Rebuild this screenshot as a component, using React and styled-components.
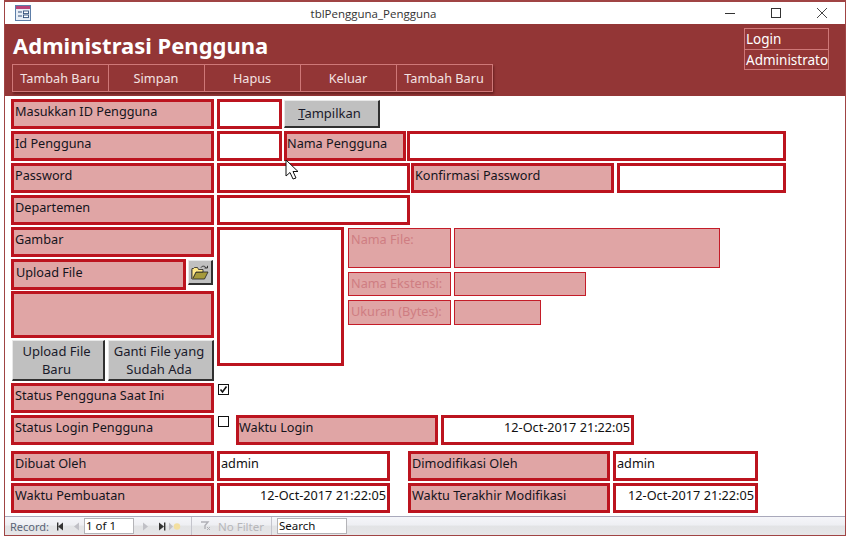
import React from "react";
import styled, { createGlobalStyle } from "styled-components";

const Global = createGlobalStyle`
  html, body { margin: 0; padding: 0; background: #fff; }
  body { font-family: "Noto Sans", "Open Sans", sans-serif; font-size: 12.7px; color: #111; }
`;

const Frame = styled.div`
  position: relative;
  box-sizing: border-box;
  width: 842px;
  height: 536px;
  margin: 0 6px 4px 4px;
  border: 1px solid #a04444;
  border-top-width: 2px;
  display: flex;
  flex-direction: column;
  overflow: hidden;
  background: #fff;
`;
const TitleBar = styled.div`
  flex: 0 0 22px;
  display: flex;
  align-items: center;
  padding-left: 10px;
`;
const TitleText = styled.div`
  flex: 1;
  text-align: center;
  font-family: "Open Sans", sans-serif;
  font-size: 11.5px;
  color: #333;
  padding-left: 9px;
`;
const WinBtns = styled.div`
  display: flex;
  width: 138px;
`;
const WinBtn = styled.div`
  width: 46px;
  height: 22px;
  display: flex;
  align-items: center;
  justify-content: center;
  svg { display: block; }
`;
const Header = styled.div`
  flex: 0 0 72px;
  background: #933636;
  display: flex;
  justify-content: space-between;
  padding: 4px 16px 0 7px;
  box-sizing: border-box;
`;
const HeaderLeft = styled.div`
  display: flex;
  flex-direction: column;
`;
const Heading = styled.div`
  font-size: 22px;
  line-height: 34px;
  height: 36px;
  font-weight: 700;
  color: #fff;
  padding-left: 1px;
`;
const Nav = styled.div`
  display: flex;
  box-sizing: border-box;
  width: 481px;
  height: 28px;
  border: 1px solid #cf7878;
  box-shadow: 1px 2px 2px rgba(70, 15, 15, 0.55);
`;
const NavItem = styled.div`
  flex: 1;
  display: flex;
  align-items: center;
  justify-content: center;
  color: #f4e2e2;
  font-size: 12.7px;
  padding-right: 1px;
  & + & { border-left: 1px solid #cf7878; }
`;
const LoginBox = styled.div`
  box-sizing: border-box;
  width: 85px;
  height: 42px;
  border: 1px solid #cf7878;
  display: flex;
  flex-direction: column;
  color: #fff;
  font-size: 13.5px;
  overflow: hidden;
`;
const LoginLine = styled.div`
  flex: 1;
  line-height: 20px;
  padding-left: 1px;
  white-space: nowrap;
  & + & { border-top: 1px solid #cf7878; }
`;
const Form = styled.div`
  flex: 1;
  padding: 3px 0 0 6px;
  display: flex;
  flex-direction: column;
`;
const Row = styled.div`
  display: flex;
  height: ${p => p.$h || 30}px;
  margin-bottom: ${p => p.$mb ?? 2}px;
`;
const Label = styled.div`
  box-sizing: border-box;
  width: ${p => p.$w || 203}px;
  height: ${p => p.$h ? p.$h + "px" : "100%"};
  margin-bottom: ${p => p.$mb || 0}px;
  margin-left: ${p => p.$ml || 0}px;
  border: 3px solid #bc141f;
  background: #e0a5a5;
  padding-left: ${p => p.$pl ?? 1}px;
  font-size: 12.7px;
  line-height: ${p => p.$lh || 19}px;
  white-space: nowrap;
  overflow: hidden;
  color: #14141c;
`;
const Input = styled.div`
  box-sizing: border-box;
  width: ${p => p.$w}px;
  height: ${p => p.$h ? p.$h + "px" : "100%"};
  margin-left: ${p => p.$ml ?? 3}px;
  border: 3px solid #bc141f;
  background: #fff;
  padding: 0 1px;
  font-size: 12.7px;
  line-height: 19px;
  text-align: ${p => p.$right ? "right" : "left"};
  white-space: nowrap;
  color: #111;
`;
const GreyButton = styled.div`
  box-sizing: border-box;
  background: #c0c0c0;
  border-right: 2px solid #303030;
  border-bottom: 2px solid #303030;
  border-top: 1px solid #e8e8e8;
  border-left: 1px solid #e8e8e8;
  text-align: center;
  color: #1a1a2a;
  font-size: 13px;
`;
const ShowButton = styled(GreyButton)`
  width: 96px;
  height: 28px;
  margin: 1px 0 0 2px;
  line-height: 25px;
  padding-right: 4px;
  u { text-decoration: underline; }
`;
const FolderButton = styled(GreyButton)`
  width: 25px;
  height: 25px;
  margin: 1px 0 0 2px;
  display: flex;
  align-items: center;
  justify-content: center;
  svg { display: block; }
`;
const Block = styled.div`
  display: flex;
  margin-bottom: 2px;
  height: 154px;
`;
const LeftColumn = styled.div`
  width: 203px;
  display: flex;
  flex-direction: column;
`;
const ActionRow = styled.div`
  display: flex;
  justify-content: space-between;
  height: 41px;
  padding-left: 1px;
`;
const ActionButton = styled(GreyButton)`
  width: ${p => p.$w}px;
  line-height: 18px;
  padding: 1px 3px 0 0;
  white-space: nowrap;
`;
const Details = styled.div`
  margin: 1px 0 0 4px;
  display: flex;
  flex-direction: column;
  gap: 4px;
`;
const DetailRow = styled.div`
  display: flex;
  gap: 3px;
  height: ${p => p.$h}px;
`;
const DetailBox = styled.div`
  box-sizing: border-box;
  width: ${p => p.$w}px;
  border: 1px solid #c41c28;
  background: #e0a5a5;
  color: #cf7d82;
  font-size: 12.7px;
  line-height: 20px;
  padding-left: 2px;
  white-space: nowrap;
  overflow: hidden;
`;
const Check = styled.div`
  box-sizing: border-box;
  width: 11px;
  height: 11px;
  margin: 1px 0 0 4px;
  border: 1px solid #111;
  background: #fff;
  svg { display: block; }
`;
const Footer = styled.div`
  flex: 0 0 19px;
  box-sizing: border-box;
  border-top: 1px solid #a9a9bb;
  background: linear-gradient(#f5f5f9 0%, #eeeff3 45%, #e2e3e5 50%, #e6e6e8 100%);
  display: flex;
  align-items: center;
  font-size: 11px;
  color: #5a6478;
  margin-top: auto;
`;
const RecordLabel = styled.span`
  margin-left: 5px;
  width: 42px;
`;
const NavIcon = styled.span`
  display: inline-flex;
  position: relative;
  width: ${p => p.$w || 16}px;
  justify-content: center;
  svg { display: block; }
`;
const FooterInput = styled.div`
  box-sizing: border-box;
  width: ${p => p.$w}px;
  height: 16px;
  margin-left: ${p => p.$ml || 0}px;
  border: 1px solid #b4b4b8;
  background: #fff;
  color: #111;
  font-size: 11.5px;
  line-height: 14px;
  padding-left: 1px;
`;
const FooterSep = styled.div`
  width: 1px;
  height: 18px;
  background: #c4c4cc;
  margin-left: ${p => p.$ml}px;
`;
const NoFilter = styled.span`
  color: #b6b6ba;
  font-size: 11.5px;
`;
const Pointer = styled.svg`
  position: absolute;
  left: 280px;
  top: 157px;
  display: block;
`;

const Arrow = ({ dir = "r", bar, color = "#333" }) => (
  <svg width="9" height="9" viewBox="0 0 9 9">
    <path d={dir === "r" ? "M2 0.5 L7 4.5 L2 8.5 Z" : "M7 0.5 L2 4.5 L7 8.5 Z"} fill={color} />
    {bar && <rect x={dir === "r" ? 7 : 1} y="0.5" width="1.4" height="8" fill={color} />}
  </svg>
);

export default function App() {
  return (
    <>
      <Global />
      <Frame>
        <TitleBar>
          <svg width="16" height="16" viewBox="0 0 16 16">
            <rect x="0.5" y="0.5" width="15" height="15" fill="#e8eef6" stroke="#5d7ea8" />
            <rect x="1" y="1" width="14" height="3" fill="#b9447a" />
            <path d="M3 7h4M3 11h4" stroke="#33507a" strokeWidth="1.2" />
            <rect x="8.5" y="6" width="5" height="2.6" fill="#fff" stroke="#33507a" strokeWidth="0.9" />
            <rect x="8.5" y="10" width="5" height="2.6" fill="#fff" stroke="#33507a" strokeWidth="0.9" />
          </svg>
          <TitleText>tblPengguna_Pengguna</TitleText>
          <WinBtns>
            <WinBtn>
              <svg width="10" height="10" viewBox="0 0 10 10"><path d="M0 5.5h10" stroke="#333" /></svg>
            </WinBtn>
            <WinBtn>
              <svg width="10" height="10" viewBox="0 0 10 10"><rect x="0.5" y="0.5" width="9" height="9" fill="none" stroke="#333" /></svg>
            </WinBtn>
            <WinBtn>
              <svg width="10" height="10" viewBox="0 0 10 10"><path d="M0 0L10 10M10 0L0 10" stroke="#333" strokeWidth="0.9" /></svg>
            </WinBtn>
          </WinBtns>
        </TitleBar>
        <Header>
          <HeaderLeft>
            <Heading>Administrasi Pengguna</Heading>
            <Nav>
              <NavItem>Tambah Baru</NavItem>
              <NavItem>Simpan</NavItem>
              <NavItem>Hapus</NavItem>
              <NavItem>Keluar</NavItem>
              <NavItem>Tambah Baru</NavItem>
            </Nav>
          </HeaderLeft>
          <LoginBox>
            <LoginLine>Login</LoginLine>
            <LoginLine>Administrato</LoginLine>
          </LoginBox>
        </Header>
        <Form>
          <Row>
            <Label>Masukkan ID Pengguna</Label>
            <Input $w={65} />
            <ShowButton><u>T</u>ampilkan</ShowButton>
          </Row>
          <Row>
            <Label>Id Pengguna</Label>
            <Input $w={65} />
            <Label $w={122} $ml={2} $pl={0}>Nama Pengguna</Label>
            <Input $w={379} $ml={1} />
          </Row>
          <Row>
            <Label>Password</Label>
            <Input $w={193} />
            <Label $w={203} $ml={1}>Konfirmasi Password</Label>
            <Input $w={169} />
          </Row>
          <Row>
            <Label>Departemen</Label>
            <Input $w={193} />
          </Row>
          <Block>
            <LeftColumn>
              <Label $h={30} $mb={2}>Gambar</Label>
              <Row $h={31} $mb={1}>
                <Label $w={175} $pl={2} $lh={21}>Upload File</Label>
                <FolderButton>
                  <svg width="18" height="15" viewBox="0 0 18 15">
                    <path d="M1 4.5V14H13.5L17 7H5L2 13" fill="#a69a3c" stroke="#222" strokeWidth="0.8" />
                    <path d="M1 14V3.5H2.5L3.5 2.5H6.5L7.5 4.5H12V7H5L2 13" fill="#ffe98a" stroke="#222" strokeWidth="0.8" />
                    <path d="M10 2.5C11 0.8 14 0.6 15 2.8" fill="none" stroke="#222" strokeWidth="0.9" />
                    <path d="M13.5 3H16.5V0.8" fill="none" stroke="#222" strokeWidth="0.9" />
                  </svg>
                </FolderButton>
              </Row>
              <Label $h={47} $mb={2}></Label>
              <ActionRow>
                <ActionButton $w={93}>Upload File<br />Baru</ActionButton>
                <ActionButton $w={106}>Ganti File yang<br />Sudah Ada</ActionButton>
              </ActionRow>
            </LeftColumn>
            <Input $w={127} $h={139} />
            <Details>
              <DetailRow $h={40}>
                <DetailBox $w={103}>Nama File:</DetailBox>
                <DetailBox $w={266} />
              </DetailRow>
              <DetailRow $h={24}>
                <DetailBox $w={103}>Nama Ekstensi:</DetailBox>
                <DetailBox $w={132} />
              </DetailRow>
              <DetailRow $h={25}>
                <DetailBox $w={103}>Ukuran (Bytes):</DetailBox>
                <DetailBox $w={87} />
              </DetailRow>
            </Details>
          </Block>
          <Row>
            <Label>Status Pengguna Saat Ini</Label>
            <Check>
              <svg width="9" height="9" viewBox="0 0 9 9"><path d="M1.5 4.5L3.5 7L7.5 1.5" fill="none" stroke="#111" strokeWidth="1.6" /></svg>
            </Check>
          </Row>
          <Row $mb={6}>
            <Label>Status Login Pengguna</Label>
            <Check />
            <Label $w={202} $ml={7} $pl={0}>Waktu Login</Label>
            <Input $w={193} $right>12-Oct-2017 21:22:05</Input>
          </Row>
          <Row>
            <Label>Dibuat Oleh</Label>
            <Input $w={173}>admin</Input>
            <Label $w={202} $ml={18}>Dimodifikasi Oleh</Label>
            <Input $w={145}>admin</Input>
          </Row>
          <Row $mb={0}>
            <Label>Waktu Pembuatan</Label>
            <Input $w={173} $right>12-Oct-2017 21:22:05</Input>
            <Label $w={202} $ml={18}>Waktu Terakhir Modifikasi</Label>
            <Input $w={145} $right>12-Oct-2017 21:22:05</Input>
          </Row>
        </Form>
        <Footer>
          <RecordLabel>Record:</RecordLabel>
          <NavIcon><Arrow dir="l" bar /></NavIcon>
          <NavIcon><Arrow dir="l" color="#c0c0c6" /></NavIcon>
          <FooterInput $w={50}>1 of 1</FooterInput>
          <NavIcon $w={22}><Arrow color="#c0c0c6" /></NavIcon>
          <NavIcon $w={10}><Arrow bar /></NavIcon>
          <NavIcon $w={18}>
            <svg width="14" height="9" viewBox="0 0 14 9">
              <path d="M1 0.5L5 4.5L1 8.5Z" fill="#c0c0c6" />
              <circle cx="9" cy="4.5" r="3.2" fill="#f3dfa0" />
            </svg>
          </NavIcon>
          <FooterSep $ml={7} />
          <NavIcon $w={26}>
            <svg width="11" height="10" viewBox="0 0 11 10"><path d="M1 1h7L5 4.5V8" fill="none" stroke="#b0b0b6" strokeWidth="1.4" /><path d="M7 6l3 3M10 6L7 9" stroke="#b0b0b6" /></svg>
          </NavIcon>
          <NoFilter>No Filter</NoFilter>
          <FooterSep $ml={7} />
          <FooterInput $w={70} $ml={5}>Search</FooterInput>
        </Footer>
        <Pointer width="14" height="22" viewBox="0 0 14 22">
          <path d="M1 1V17L5 13.5L8 20L11 19L8 12.5H13Z" fill="#fff" stroke="#111" />
        </Pointer>
      </Frame>
    </>
  );
}
